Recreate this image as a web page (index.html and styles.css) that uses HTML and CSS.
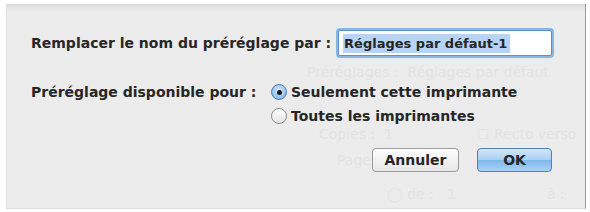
FILE: index.html
```html
<!DOCTYPE html>
<html lang="fr">
<head>
    <meta charset="UTF-8">
    <title>Renommer le préréglage</title>
    <link rel="stylesheet" href="styles.css">
</head>
<body>
    <div class="sheet">
        <!-- faded window behind the sheet -->
        <div class="ghost">
            <span class="ghost-item g-preset">Préréglages :&nbsp;&nbsp;Réglages par défaut</span>
            <span class="ghost-item g-copies">Copies :&nbsp;&nbsp;1</span>
            <span class="ghost-item g-recto">☐ Recto verso</span>
            <span class="ghost-item g-pages">Pages :</span>
            <span class="ghost-item g-range">◯ de :&nbsp;&nbsp;&nbsp;1</span>
            <span class="ghost-item g-to">à :</span>
        </div>

        <div class="row name-row">
            <label class="label" for="preset-name">Remplacer le nom du préréglage par :</label>
            <div class="field" id="preset-name">
                <span class="selected">Réglages par défaut-1</span>
            </div>
        </div>

        <div class="row avail-row">
            <span class="label avail-label">Préréglage disponible pour :</span>
            <div class="radio-group">
                <div class="radio-item">
                    <span class="radio radio-on"></span>
                    <span>Seulement cette imprimante</span>
                </div>
                <div class="radio-item">
                    <span class="radio"></span>
                    <span>Toutes les imprimantes</span>
                </div>
            </div>
        </div>

        <div class="buttons">
            <button class="btn btn-cancel">Annuler</button>
            <button class="btn btn-ok">OK</button>
        </div>
    </div>
</body>
</html>
```

FILE: styles.css
```css
body {
    margin: 0;
    background-color: #ffffff;
    font-family: "DejaVu Sans", "Liberation Sans", sans-serif;
    font-size: 14px;
    font-weight: bold;
    color: #262626;
}
.sheet {
    position: relative;
    margin: 4px 4px 3px 6px;
    height: 205px;
    box-sizing: border-box;
    padding: 26px 33px 0 24px;
    background: linear-gradient(to bottom, #d6d6d6 0, #e6e6e6 4px, #ececec 9px, #ececec 100%);
    border-right: 1px solid #9a9a9a;
    border-bottom: 1px solid #dcdcdc;
    border-left: 1px solid #e2e2e2;
}
.ghost {
    position: absolute;
    inset: 0;
    pointer-events: none;
    color: #e3e3e3;
    font-weight: normal;
}
.ghost-item {
    position: absolute;
}
.g-preset { left: 300px; top: 60px; }
.g-copies { left: 312px; top: 122px; }
.g-recto { left: 470px; top: 122px; }
.g-pages { left: 330px; top: 148px; }
.g-range { left: 380px; top: 182px; }
.g-to { left: 540px; top: 182px; }
.row {
    position: relative;
    display: flex;
    align-items: center;
}
.name-row {
    gap: 7px;
}
.label {
    white-space: nowrap;
}
.field {
    width: 216px;
    height: 24px;
    display: flex;
    align-items: center;
    padding-left: 4px;
    font-size: 13px;
    background-color: #ffffff;
    border: 1px solid #5c8fcb;
    border-radius: 2px;
    box-shadow: 0 0 0 2px #8ab6e6;
}
.selected {
    background-color: #b7d4f6;
    padding: 2px 3px 2px 1px;
}
.avail-row {
    margin-top: 28px;
    align-items: flex-start;
}
.avail-label {
    width: 240px;
    line-height: 16px;
}
.radio-group {
    display: flex;
    flex-direction: column;
    gap: 8px;
}
.radio-item {
    display: flex;
    align-items: center;
    gap: 4px;
    height: 16px;
}
.radio {
    width: 14px;
    height: 14px;
    border-radius: 50%;
    border: 1px solid #8c8c8c;
    background: linear-gradient(to bottom, #ffffff, #e4e4e4);
    display: flex;
    align-items: center;
    justify-content: center;
}
.radio-on {
    border-color: #4f7fb8;
    background: radial-gradient(circle at 50% 40%, #dcecfc 0, #9cc8f2 55%, #6aa6e2 100%);
}
.radio-on::after {
    content: "";
    width: 5px;
    height: 5px;
    border-radius: 50%;
    background-color: #1a1a1a;
}
.buttons {
    position: relative;
    display: flex;
    justify-content: flex-end;
    gap: 18px;
    margin-top: 24px;
}
.btn {
    height: 24px;
    padding: 0;
    font-family: inherit;
    font-size: 14px;
    font-weight: bold;
    color: #262626;
    border-radius: 4px;
    cursor: pointer;
}
.btn-cancel {
    width: 87px;
    border: 1px solid #9a9a9a;
    background: linear-gradient(to bottom, #ffffff, #f2f2f2 50%, #e8e8e8);
}
.btn-ok {
    width: 75px;
    border: 1px solid #4f7fb8;
    background: linear-gradient(to bottom, #d2e7fb, #a9d0f4 50%, #7fb8ec 51%, #a8d3f7);
}
```
